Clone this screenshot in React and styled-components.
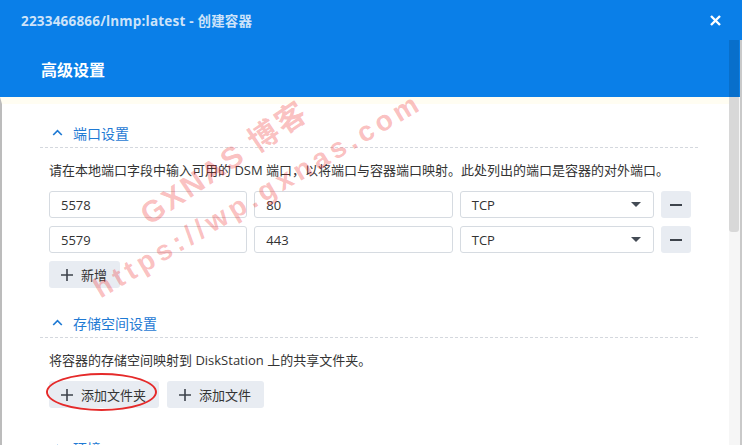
import styled, { createGlobalStyle } from 'styled-components';

const GlobalStyle = createGlobalStyle`
  html, body {
    margin: 0;
    padding: 0;
    background: #ffffff;
  }
  body {
    width: 742px;
    height: 445px;
    overflow: hidden;
    font-family: "Open Sans", "Noto Sans CJK SC", sans-serif;
  }
`;

const Window = styled.div`
  position: relative;
  width: 742px;
  height: 445px;
  display: flex;
  flex-direction: column;
  overflow: hidden;
  background: #ffffff;
`;

const TitleBar = styled.div`
  height: 40px;
  flex: none;
  background: #0a7fe8;
  display: flex;
  align-items: center;
  justify-content: space-between;
  padding: 0 20px 0 21px;
`;

const Title = styled.div`
  color: #cde3f9;
  font-size: 13.5px;
  font-weight: 700;
  letter-spacing: 0.2px;
`;

const Close = styled.div`
  width: 14px;
  height: 14px;
  display: flex;
  align-items: center;
  justify-content: center;
`;

const Main = styled.div`
  flex: 1;
  display: flex;
  min-height: 0;
`;

const Column = styled.div`
  flex: 1;
  display: flex;
  flex-direction: column;
  min-width: 0;
`;

const PageHeader = styled.div`
  height: 57px;
  flex: none;
  background: #0a7fe8;
  display: flex;
  align-items: center;
  padding: 0 0 0 41px;
  color: #ffffff;
  font-size: 16px;
  font-weight: 700;
`;

const Body = styled.div`
  flex: 1;
  border-left: 2px solid #bcbcbc;
  border-top: 7px solid #fffdf2;
  padding: 14px 31px 0 38px;
`;

const Section = styled.div`
  margin-bottom: ${p => p.$gap || 20}px;
`;

const SectionHead = styled.div`
  height: 29px;
  display: flex;
  align-items: center;
  gap: 10px;
  padding-left: 12px;
  border-bottom: 1px dashed #d4d8de;
  color: #1f7ad4;
  font-size: 14px;
`;

const SectionInner = styled.div`
  padding: 0 7px 0 9px;
`;

const Desc = styled.div`
  font-size: 13px;
  color: #333333;
  line-height: 20px;
  margin: 12px 0 11px;
`;

const Row = styled.div`
  display: flex;
  gap: 7px;
  margin-bottom: 8px;
`;

const Field = styled.div`
  box-sizing: border-box;
  width: ${p => p.$w}px;
  height: 27px;
  border: 1px solid #d6dbe1;
  border-radius: 3px;
  background: #ffffff;
  display: flex;
  align-items: center;
  justify-content: space-between;
  padding: 0 12px 0 11px;
  font-size: 13px;
  color: #333333;
`;

const Caret = styled.span`
  width: 0;
  height: 0;
  border-left: 5px solid transparent;
  border-right: 5px solid transparent;
  border-top: 5px solid #444b55;
`;

const IconButton = styled.div`
  width: 30px;
  height: 27px;
  border-radius: 3px;
  background: #e8ecf2;
  display: flex;
  align-items: center;
  justify-content: center;
`;

const Dash = styled.span`
  width: 12px;
  height: 2px;
  background: #3d434b;
`;

const ButtonRow = styled.div`
  display: flex;
  gap: 8px;
`;

const Button = styled.div`
  position: relative;
  height: 27px;
  box-sizing: border-box;
  padding: 0 13px 0 12px;
  border-radius: 3px;
  background: #e8ecf2;
  display: flex;
  align-items: center;
  gap: 8px;
  font-size: 13px;
  color: #333333;
`;

const Circle = styled.div`
  position: absolute;
  left: -3px;
  top: -8px;
  width: 111px;
  height: 38px;
  border: 2px solid #e52a2a;
  border-radius: 50%;
  box-sizing: border-box;
  pointer-events: none;
`;

const Scrollbar = styled.div`
  width: 11px;
  flex: none;
  display: flex;
  flex-direction: column;
  background: linear-gradient(to bottom, #0a7fe8 0 57px, #f6f6f6 57px);
  border-right: 2px solid #c9c9c9;
`;

const Thumb = styled.div`
  height: 192px;
  margin: 0 1px 0 0;
  background: rgba(0, 0, 0, 0.12);
  border-radius: 0 0 3px 3px;
`;

const Watermark = styled.div`
  position: absolute;
  left: ${p => p.$x}px;
  top: ${p => p.$y}px;
  transform: rotate(${p => p.$r}deg);
  transform-origin: left bottom;
  color: rgba(240, 40, 40, 0.3);
  font-family: "Liberation Sans", "Noto Sans CJK SC", sans-serif;
  font-size: ${p => p.$size}px;
  font-weight: 700;
  letter-spacing: ${p => p.$ls}px;
  line-height: 1;
  white-space: nowrap;
  pointer-events: none;
`;

const Chevron = () => (
  <svg width="11" height="7" viewBox="0 0 11 7">
    <path d="M1.2 6 L5.5 1.7 L9.8 6" fill="none" stroke="#1f7ad4" strokeWidth="1.7" />
  </svg>
);

const Plus = () => (
  <svg width="12" height="12" viewBox="0 0 12 12">
    <path d="M6 0 V12 M0 6 H12" stroke="#3d434b" strokeWidth="1.6" />
  </svg>
);

const ports = [
  ['5578', '80'],
  ['5579', '443'],
];

export default function App() {
  return (
    <>
      <GlobalStyle />
      <Window>
        <TitleBar>
          <Title>2233466866/lnmp:latest - 创建容器</Title>
          <Close>
            <svg width="11" height="11" viewBox="0 0 11 11">
              <path d="M1 1 L10 10 M10 1 L1 10" stroke="#ffffff" strokeWidth="2.4" />
            </svg>
          </Close>
        </TitleBar>
        <Main>
          <Column>
            <PageHeader>高级设置</PageHeader>
            <Body>
              <Section $gap={20}>
                <SectionHead>
                  <Chevron />
                  端口设置
                </SectionHead>
                <SectionInner>
                  <Desc>请在本地端口字段中输入可用的 DSM 端口，以将端口与容器端口映射。此处列出的端口是容器的对外端口。</Desc>
                  {ports.map(([local, remote]) => (
                    <Row key={local}>
                      <Field $w={199}>{local}</Field>
                      <Field $w={199}>{remote}</Field>
                      <Field $w={195}>
                        TCP
                        <Caret />
                      </Field>
                      <IconButton>
                        <Dash />
                      </IconButton>
                    </Row>
                  ))}
                  <ButtonRow>
                    <Button>
                      <Plus />
                      新增
                    </Button>
                  </ButtonRow>
                </SectionInner>
              </Section>
              <Section $gap={25}>
                <SectionHead>
                  <Chevron />
                  存储空间设置
                </SectionHead>
                <SectionInner>
                  <Desc>将容器的存储空间映射到 DiskStation 上的共享文件夹。</Desc>
                  <ButtonRow>
                    <Button>
                      <Plus />
                      添加文件夹
                      <Circle />
                    </Button>
                    <Button>
                      <Plus />
                      添加文件
                    </Button>
                  </ButtonRow>
                </SectionInner>
              </Section>
              <Section>
                <SectionHead>
                  <Chevron />
                  环境
                </SectionHead>
              </Section>
            </Body>
          </Column>
          <Scrollbar>
            <Thumb />
          </Scrollbar>
        </Main>
        <Watermark $x={152} $y={200} $r={-34} $size={30} $ls={2.5}>GXNAS 博客</Watermark>
        <Watermark $x={103} $y={275} $r={-30.5} $size={28} $ls={4.5}>https://wp.gxnas.com</Watermark>
      </Window>
    </>
  );
}
